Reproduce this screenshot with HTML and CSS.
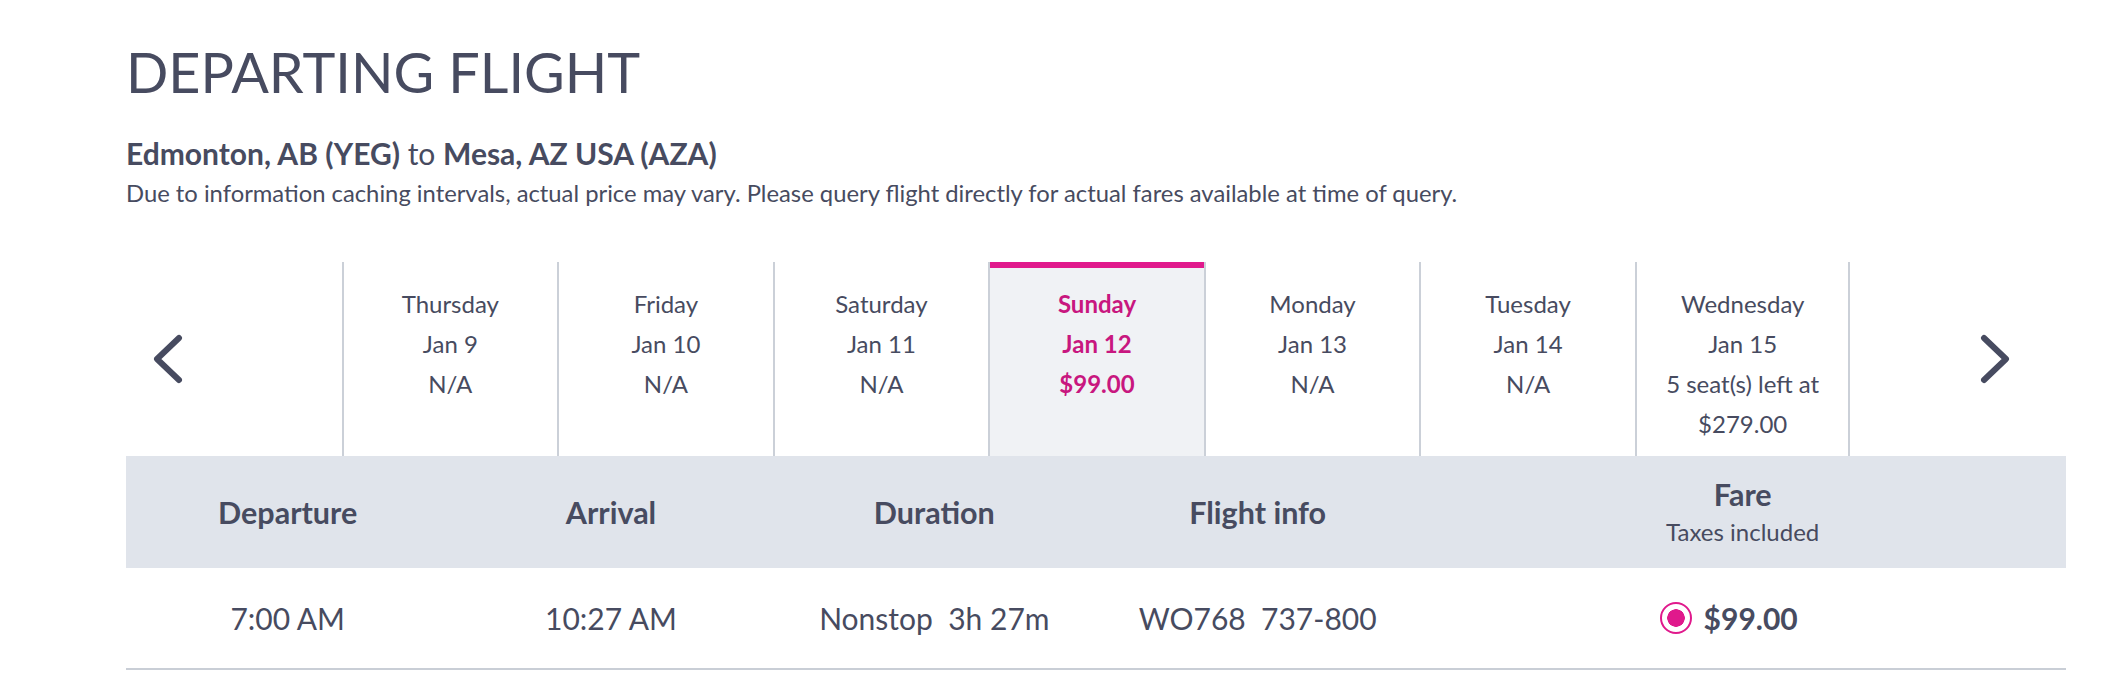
FILE: index.html
```html
<!DOCTYPE html>
<html lang="en">
<head>
  <meta charset="UTF-8">
  <meta name="viewport" content="width=device-width, initial-scale=1.0">
  <title>Departing Flight</title>
  <link rel="stylesheet" href="styles.css">
</head>
<body>
  <div class="page">
    <h1>DEPARTING FLIGHT</h1>
    <p class="route"><b>Edmonton, AB (YEG)</b> to <b>Mesa, AZ USA (AZA)</b></p>
    <p class="note">Due to information caching intervals, actual price may vary. Please query flight directly for actual fares available at time of query.</p>

    <!-- date picker -->
    <div class="dates">
      <a class="nav-arrow prev" href="#">
        <svg width="30" height="50" viewBox="0 0 30 50"><path d="M26 4 L4 25 L26 46" fill="none" stroke="#474b60" stroke-width="6" stroke-linecap="round" stroke-linejoin="round"/></svg>
      </a>
      <div class="day">Thursday<br>Jan 9<br>N/A</div>
      <div class="day">Friday<br>Jan 10<br>N/A</div>
      <div class="day">Saturday<br>Jan 11<br>N/A</div>
      <div class="day active">Sunday<br>Jan 12<br>$99.00</div>
      <div class="day">Monday<br>Jan 13<br>N/A</div>
      <div class="day">Tuesday<br>Jan 14<br>N/A</div>
      <div class="day last">Wednesday<br>Jan 15<br>5 seat(s) left at<br>$279.00</div>
      <a class="nav-arrow next" href="#">
        <svg width="30" height="50" viewBox="0 0 30 50"><path d="M4 4 L26 25 L4 46" fill="none" stroke="#474b60" stroke-width="6" stroke-linecap="round" stroke-linejoin="round"/></svg>
      </a>
    </div>

    <!-- flight table -->
    <div class="flights">
      <div class="flights-head">
        <div>Departure</div>
        <div>Arrival</div>
        <div>Duration</div>
        <div>Flight info</div>
        <div class="fare">Fare<span>Taxes included</span></div>
      </div>
      <div class="flight-row">
        <div>7:00 AM</div>
        <div>10:27 AM</div>
        <div>Nonstop&nbsp;&nbsp;3h 27m</div>
        <div>WO768&nbsp;&nbsp;737-800</div>
        <label class="fare">
          <span class="radio"></span>
          <b>$99.00</b>
        </label>
      </div>
    </div>
  </div>
</body>
</html>
```

FILE: styles.css
```css
body {
  margin: 0;
  font-family: 'Lato', 'Open Sans', sans-serif;
  color: #474b60;
  background: #fff;
}
.page {
  padding: 39px 58px 0 126px;
}
h1 {
  margin: 0;
  font-size: 55.7px;
  font-weight: normal;
  line-height: 1.2;
}
.route {
  margin: 29px 0 0;
  font-size: 30px;
  line-height: 36px;
}
.note {
  margin: 8px 0 0;
  font-size: 23.8px;
  line-height: 28px;
}

/* date carousel */
.dates {
  display: grid;
  grid-template-columns: repeat(9, minmax(0, 1fr));
  height: 194px;
  margin-top: 55px;
}
.nav-arrow {
  display: flex;
  align-items: center;
}
.nav-arrow.prev {
  padding-left: 27px;
}
.nav-arrow.next {
  justify-content: flex-end;
  padding-right: 56px;
}
.day {
  border-left: 2px solid #cbd0d8;
  padding-top: 22px;
  text-align: center;
  font-size: 24px;
  line-height: 40px;
}
.day.last {
  border-right: 2px solid #cbd0d8;
}
.day.active {
  background: #f0f2f5;
  color: #c8177f;
  font-weight: bold;
  box-shadow: inset 0 6px 0 #e0198c;
}

/* table */
.flights-head,
.flight-row {
  display: grid;
  grid-template-columns: repeat(6, minmax(0, 1fr));
  align-items: center;
  text-align: center;
}
.flights-head {
  height: 112px;
  background: #e0e4eb;
  font-size: 30.5px;
  font-weight: bold;
}
.flight-row {
  height: 100px;
  border-bottom: 2px solid #c9ced6;
  font-size: 30px;
}
.fare {
  grid-column: span 2;
}
.flights-head .fare {
  line-height: 36px;
}
.flights-head .fare span {
  display: block;
  margin-top: 5px;
  font-size: 24px;
  line-height: 30px;
  font-weight: normal;
}
.flight-row .fare {
  display: flex;
  justify-content: center;
  align-items: center;
  gap: 12px;
  padding-right: 28px;
}
.radio {
  width: 28px;
  height: 28px;
  border: 2.5px solid #e0198c;
  border-radius: 50%;
  background: radial-gradient(circle, #e0198c 0 8.5px, #fff 9px);
}
```
